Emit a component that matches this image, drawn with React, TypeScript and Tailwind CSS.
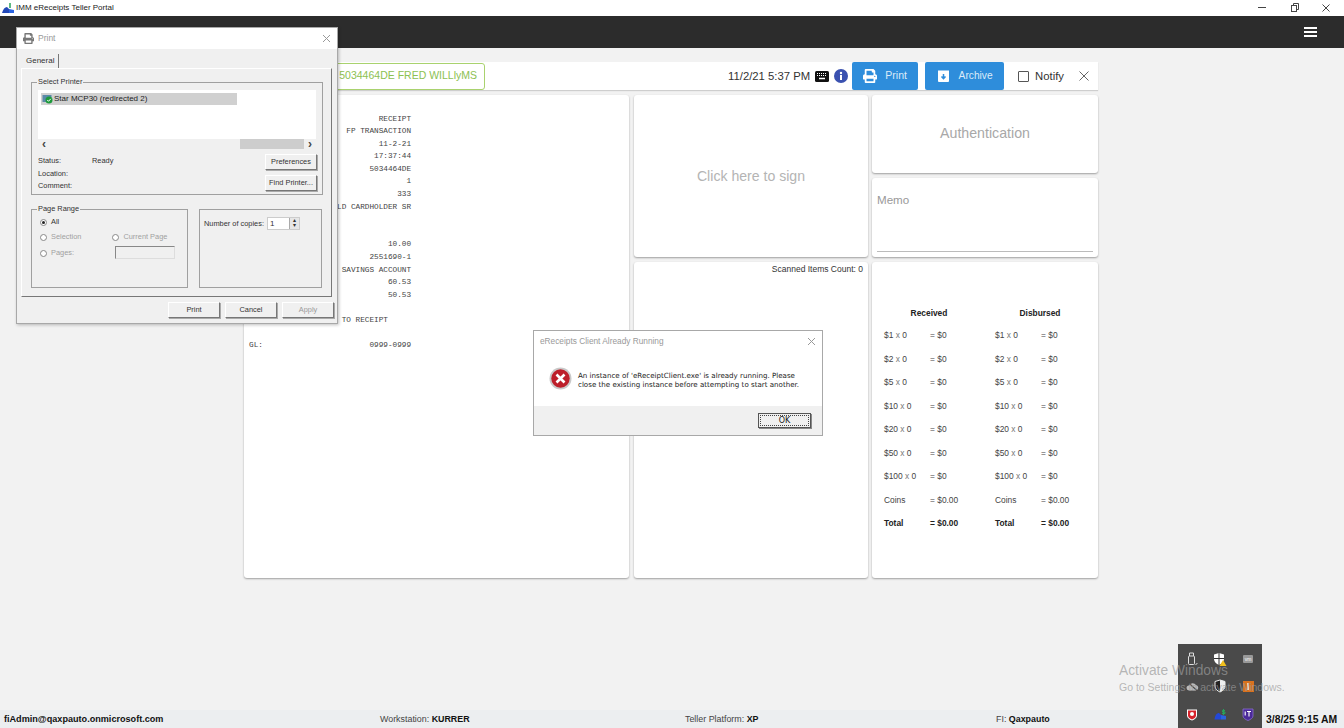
import { FaPrint } from "react-icons/fa";

const receiptLines = [
	"                            RECEIPT",
	"                     FP TRANSACTION",
	"                            11-2-21",
	"                           17:37:44",
	"                          5034464DE",
	"                                  1",
	"                                333",
	"                   LD CARDHOLDER SR",
	" ",
	" ",
	"                              10.00",
	"                          2551690-1",
	"                    SAVINGS ACCOUNT",
	"                              60.53",
	"                              50.53",
	" ",
	"                    TO RECEIPT",
	" ",
	"GL:                       0999-0999",
];

const denominations = ["$1", "$2", "$5", "$10", "$20", "$50", "$100"];

function CashColumn({ title }: { title: string }) {
	return (
		<div className="w-[90px]">
			<div className="h-[22px] text-center font-bold text-[#222] leading-[10px]">{title}</div>
			{denominations.map((d) => (
				<div key={d} className="flex h-[23.5px] text-[#444] leading-[10px]">
					<span className="w-[46px]">
						{d} <span className="text-[#777]">x</span> 0
					</span>
					<span>= $0</span>
				</div>
			))}
			<div className="flex h-[23.5px] text-[#444] leading-[10px]">
				<span className="w-[46px]">Coins</span>
				<span>= $0.00</span>
			</div>
			<div className="flex h-[20px] font-bold text-[#222] leading-[10px]">
				<span className="w-[46px]">Total</span>
				<span>= $0.00</span>
			</div>
		</div>
	);
}

function Card({ className, children }: { className: string; children?: React.ReactNode }) {
	return (
		<div className={`bg-white rounded-[3px] shadow-[0_1px_2px_rgba(0,0,0,0.35)] ${className}`}>
			{children}
		</div>
	);
}

function WinButton({ label, disabled, className = "" }: { label: string; disabled?: boolean; className?: string }) {
	return (
		<div
			className={`flex items-center justify-center bg-[#f0f0f0] border border-[#fff] border-r-[#777] border-b-[#777] shadow-[1px_1px_0_#aaa] ${
				disabled ? "text-[#9a9a9a]" : "text-[#333]"
			} ${className}`}
		>
			{label}
		</div>
	);
}

function Radio({ checked, label, disabled }: { checked?: boolean; label: string; disabled?: boolean }) {
	return (
		<div className={`flex items-center gap-[4px] ${disabled ? "text-[#a0a0a0]" : "text-[#333]"}`}>
			<span className="w-[7px] h-[7px] rounded-full bg-white border border-[#888] flex items-center justify-center">
				{checked && <span className="w-[3px] h-[3px] rounded-full bg-[#222]" />}
			</span>
			{label}
		</div>
	);
}

function GroupLabel({ label }: { label: string }) {
	return (
		<span className="absolute -top-[6px] left-[5px] bg-[#f0f0f0] px-[1px] leading-[10px] text-[#333]">
			{label}
		</span>
	);
}

function PrintDialog() {
	return (
		<div className="absolute left-[16px] top-[27px] w-[322px] h-[297px] bg-[#f0f0f0] border border-[#a8a8a8] shadow-[1px_1px_3px_rgba(0,0,0,0.25)] text-[7.4px] font-['Liberation_Sans',sans-serif]">
			<div className="h-[21px] bg-white flex items-center pl-[6px] pr-[6px]">
				<FaPrint size={11} className="text-[#777]" />
				<span className="ml-[4px] text-[8.5px] text-[#999]">Print</span>
				<svg className="ml-auto" width="9" height="9" viewBox="0 0 9 9" stroke="#999" strokeWidth="1">
					<path d="M1 1l7 7M8 1l-7 7" />
				</svg>
			</div>
			<div className="px-[4px] pt-[5px]">
				<div className="h-[14px] w-[37px] ml-[1px] border-r border-[#777] flex items-center pl-[4px] text-[#333] text-[8px]">
					General
				</div>
				<div className="w-[311px] h-[229px] border border-[#fff] border-r-[#777] border-b-[#777] pl-[9px] pt-[13px]">
					{/* Select Printer */}
					<div className="relative w-[292px] h-[113px] border border-[#a0a0a0] pl-[6px] pr-[6px] pt-[7px]">
						<GroupLabel label="Select Printer" />
						<div className="h-[49px] bg-white pt-[3px] pl-[3px]">
							<div className="w-[196px] h-[12px] bg-[#d0d0d0] flex items-center pl-[1px] gap-[1px] text-[8px] text-[#222]">
								<svg width="11" height="10" viewBox="0 0 11 10">
									<rect x="0.5" y="1" width="9" height="7" fill="#5a8aa8" />
									<circle cx="7" cy="6" r="3.5" fill="#1d9a3b" />
									<path d="M5.3 6l1.2 1.3L8.8 4.8" stroke="#fff" strokeWidth="1" fill="none" />
								</svg>
								Star MCP30 (redirected 2)
							</div>
						</div>
						<div className="h-[10px] flex items-center justify-between">
							<span className="ml-[4px] text-[#444] text-[12px] leading-none font-bold">‹</span>
							<span className="ml-auto w-[64px] h-[10px] bg-[#cdcdcd]" />
							<span className="ml-[4px] mr-[4px] text-[#444] text-[12px] leading-none font-bold">›</span>
						</div>
						<div className="flex justify-between mt-[3px]">
							<div className="flex flex-col pt-[4px] text-[#333] gap-[2.5px] leading-[10px]">
								<div className="flex">
									<span className="w-[54px]">Status:</span>
									<span>Ready</span>
								</div>
								<span>Location:</span>
								<span>Comment:</span>
							</div>
							<div className="flex flex-col gap-[5px] mt-[2px] -mr-[1px]">
								<WinButton label="Preferences" className="w-[52px] h-[16px]" />
								<WinButton label="Find Printer..." className="w-[52px] h-[16px]" />
							</div>
						</div>
					</div>
					<div className="flex mt-[14px]">
						{/* Page Range */}
						<div className="relative w-[157px] h-[79px] border border-[#a0a0a0] pl-[8px] pt-[7px] flex flex-col gap-[5px] leading-[10px]">
							<GroupLabel label="Page Range" />
							<Radio checked label="All" />
							<div className="flex gap-[31px]">
								<Radio disabled label="Selection" />
								<Radio disabled label="Current Page" />
							</div>
							<div className="flex">
								<Radio disabled label="Pages:" />
								<span className="ml-[41px] -mt-[1px] w-[60px] h-[13px] border border-[#888] border-r-[#ddd] border-b-[#ddd]" />
							</div>
						</div>
						{/* Copies */}
						<div className="ml-[11px] w-[123px] h-[79px] border border-[#a0a0a0] pl-[4px] pt-[7px]">
							<div className="flex items-center text-[#333]">
								<span>Number of copies:</span>
								<span className="ml-[3px] w-[33px] h-[13px] bg-white border border-[#ccc] flex items-center pl-[2px] text-[8px]">
									1
									<span className="ml-auto w-[10px] h-[11px] bg-[#e6e6e6] border-l border-[#aaa] text-[6px] leading-[5px] text-center">
										▴
										<br />▾
									</span>
								</span>
							</div>
						</div>
					</div>
				</div>
				<div className="flex justify-end gap-[5px] mt-[5px] -mr-[1px]">
					<WinButton label="Print" className="w-[52px] h-[16px]" />
					<WinButton label="Cancel" className="w-[52px] h-[16px]" />
					<WinButton label="Apply" disabled className="w-[52px] h-[16px]" />
				</div>
			</div>
		</div>
	);
}

function ErrorDialog() {
	return (
		<div className="absolute left-[533px] top-[330px] w-[290px] h-[106px] bg-white border border-[#a8a8a8] flex flex-col font-['DejaVu_Sans',sans-serif]">
			<div className="h-[21px] flex items-center pl-[6px] pr-[6px] text-[8.3px] text-[#999] font-['Liberation_Sans',sans-serif]">
				eReceipts Client Already Running
				<svg className="ml-auto" width="9" height="9" viewBox="0 0 9 9" stroke="#999" strokeWidth="1">
					<path d="M1 1l7 7M8 1l-7 7" />
				</svg>
			</div>
			<div className="flex-1 flex items-start pl-[15px] pt-[15px]">
				<svg width="23" height="23" viewBox="0 0 23 23">
					<circle cx="11.5" cy="11.5" r="11" fill="#c9c9c9" />
					<circle cx="11.5" cy="11.5" r="9.2" fill="#bd1f2a" />
					<path d="M7.5 7.5l8 8M15.5 7.5l-8 8" stroke="#fff" strokeWidth="2.6" />
				</svg>
				<p className="ml-[6px] mt-[4px] text-[7.1px] leading-[9.4px] text-[#222] whitespace-pre">
					{"An instance of 'eReceiptClient.exe' is already running. Please\nclose the existing instance before attempting to start another."}
				</p>
			</div>
			<div className="h-[29px] bg-[#f0f0f0] flex justify-end items-center pr-[11px]">
				<div className="w-[53px] h-[15px] border border-[#555] bg-[#f0f0f0] p-[1px] shadow-[1px_1px_0_#888]">
					<div className="h-full border border-dotted border-[#444] flex items-center justify-center text-[8px] text-[#222]">
						OK
					</div>
				</div>
			</div>
		</div>
	);
}

function TrayPopup() {
	return (
		<div className="absolute left-[1178px] top-[644px] w-[84px] h-[84px] bg-[#4a4a4a] grid grid-cols-3 grid-rows-3 place-items-center pt-[1px]">
			{/* usb stick */}
			<svg width="12" height="14" viewBox="0 0 12 14" fill="none" stroke="#ddd" strokeWidth="1">
				<rect x="2.5" y="4" width="6" height="8.500" rx="1" />
				<path d="M3.5 4V1h4v3M9.500 12.500c1 0 1.500-.5 1.500-1.500" />
			</svg>
			{/* defender warning */}
			<svg width="14" height="14" viewBox="0 0 14 14">
				<path d="M6 1l5 1.500V7c0 3-2.500 5-5 6-2.500-1-5-3-5-6V2.500z" fill="#fff" />
				<path d="M6 1v12M1 6.500h10" stroke="#333" strokeWidth="1" />
				<path d="M10 8l3.500 6h-7z" fill="#f2c01e" />
			</svg>
			<span className="w-[10px] h-[8px] bg-[#999] rounded-[1px] text-[5px] leading-[8px] text-center text-white font-['Liberation_Sans',sans-serif]">
				vm
			</span>
			{/* cloud off */}
			<svg width="13" height="11" viewBox="0 0 13 11">
				<path d="M3 9.500a2.500 2.500 0 0 1 0-5 4 4 0 0 1 7-.5 2.800 2.800 0 0 1 0 5.500z" fill="#bbb" />
				<path d="M1.500 1l10 9" stroke="#4a4a4a" strokeWidth="1.200" />
			</svg>
			{/* half shield */}
			<svg width="12" height="14" viewBox="0 0 12 14">
				<path d="M6 1l5 1.500V7c0 3-2.500 5-5 6-2.500-1-5-3-5-6V2.500z" fill="#222" stroke="#eee" strokeWidth="1" />
				<path d="M6 1l5 1.500V7c0 3-2.500 5-5 6z" fill="#eee" />
			</svg>
			<span className="w-[11px] h-[11px] bg-[#d9721e] flex items-center justify-center">
				<span className="w-[1.5px] h-[7px] bg-[#f6d5b0]" />
			</span>
			{/* red badge */}
			<svg width="12" height="13" viewBox="0 0 12 13">
				<path d="M1 1.500h10v6c0 2.500-2.500 4-5 5-2.500-1-5-2.500-5-5z" fill="#fff" />
				<path d="M2 2.500h8v5c0 2-2 3-4 4-2-1-4-2-4-4z" fill="#d8232c" />
				<circle cx="6" cy="6" r="2" fill="#fff" />
			</svg>
			{/* money shield */}
			<svg width="13" height="12" viewBox="0 0 13 12">
				<path d="M0.500 11.500C1 7 3 5 5 5l2 2v4.500z" fill="#2348d8" />
				<path d="M7 11.500V7l5 1v3.500z" fill="#2a63e0" />
				<path d="M9.500 1v6M11 2.500H8.500v1.500H11v1.500H8" stroke="#27a35a" strokeWidth="1" fill="none" />
			</svg>
			{/* IT shield */}
			<svg width="12" height="13" viewBox="0 0 12 13">
				<path d="M1 1h10v7c0 2-2.500 3.500-5 4.500-2.500-1-5-2.500-5-4.500z" fill="#4b2a9a" stroke="#8a6fd0" strokeWidth="0.800" />
				<path d="M3.200 3.500v4M5 3.500h4M7 3.500v5" stroke="#fff" strokeWidth="1.100" />
			</svg>
		</div>
	);
}

export default function App() {
	return (
		<div className="relative w-full h-screen overflow-hidden flex flex-col bg-[#f2f2f2] font-['Liberation_Sans',sans-serif]">
			{/* Window title */}
			<div className="h-[16px] bg-white flex items-center shrink-0">
				<svg className="ml-[2px]" width="12" height="12" viewBox="0 0 12 12">
					<path d="M0 11c1-4 3-6 5-6l2 2v4z" fill="#2348b8" />
					<path d="M7 11V7l5 1v3z" fill="#2a63e0" />
					<path d="M8 1v5" stroke="#27a35a" strokeWidth="1.500" />
				</svg>
				<span className="ml-[2px] text-[8px] text-[#222]">IMM eReceipts Teller Portal</span>
				<div className="ml-auto flex items-center">
					<svg width="31" height="10" viewBox="0 0 31 10" stroke="#444" fill="none">
						<path d="M1 4.500h8" />
					</svg>
					<svg width="32" height="10" viewBox="0 0 32 10" stroke="#444" fill="none">
						<rect x="3.500" y="2.500" width="5" height="6" />
						<path d="M5.500 2.500V0.500h5v6h-2" />
					</svg>
					<svg className="mr-[14px] ml-[2px]" width="8" height="8" viewBox="0 0 8 8" stroke="#444" fill="none">
						<path d="M0.500 0.500l7 7M7.500 0.500l-7 7" />
					</svg>
				</div>
			</div>

			{/* App bar */}
			<div className="h-[32px] bg-[#2c2c2c] flex items-center justify-end pr-[27px] shrink-0">
				<div className="w-[13px] flex flex-col gap-[2px]">
					<span className="h-[2px] bg-white" />
					<span className="h-[2px] bg-white" />
					<span className="h-[2px] bg-white" />
				</div>
			</div>

			{/* Main */}
			<div className="flex-1 pl-[244px] pt-[14px]">
				<div className="w-[854px]">
					{/* Toolbar */}
					<div className="h-[28px] bg-white shadow-[0_1px_1px_rgba(0,0,0,0.15)] flex items-center">
						<div className="w-[241px] h-[27px] border border-[#a9d26e] rounded-[3px] flex items-center justify-end pr-[7px] text-[10.5px] text-[#8cc152]">
							5034464DE FRED WILLlyMS
						</div>
						<span className="ml-auto text-[11.3px] text-[#333]">11/2/21 5:37 PM</span>
						<svg className="ml-[5px]" width="14" height="11" viewBox="0 0 14 11">
							<rect width="14" height="11" rx="1.500" fill="#111" />
							<path d="M2 2.500h10M2 4.500h10" stroke="#fff" strokeWidth="1" strokeDasharray="1 1" />
							<path d="M4 7.500h6" stroke="#fff" strokeWidth="1.500" />
						</svg>
						<svg className="ml-[5px]" width="14" height="14" viewBox="0 0 14 14">
							<circle cx="7" cy="7" r="7" fill="#3a51b0" />
							<rect x="6" y="6" width="2" height="5" fill="#fff" />
							<circle cx="7" cy="4" r="1.200" fill="#fff" />
						</svg>
						<div className="ml-[4px] w-[66px] h-[28px] bg-[#2e8ddb] rounded-[2px] flex items-center justify-center gap-[8px] text-[10.5px] text-[#dcebf8]">
							<FaPrint size={14} className="text-white" />
							Print
						</div>
						<div className="ml-[7px] w-[79px] h-[28px] bg-[#2e8ddb] rounded-[2px] flex items-center justify-center gap-[9px] text-[10.2px] text-[#dcebf8]">
							<svg width="13" height="14" viewBox="0 0 13 14">
								<path d="M1 1.500h11V12a1 1 0 0 1-1 1H2a1 1 0 0 1-1-1z" fill="#fff" />
								<path d="M6.500 5v4M4.500 7.500l2 2.200 2-2.200" stroke="#2e8ddb" strokeWidth="1.500" fill="none" />
							</svg>
							Archive
						</div>
						<span className="ml-[14px] w-[11px] h-[11px] border border-[#555] rounded-[1px]" />
						<span className="ml-[6px] text-[11.3px] text-[#333]">Notify</span>
						<svg className="ml-[15px] mr-[9px]" width="10" height="10" viewBox="0 0 10 10" stroke="#666" strokeWidth="1" fill="none">
							<path d="M0.500 0.500l9 9M9.500 0.500l-9 9" />
						</svg>
					</div>

					{/* Panels */}
					<div className="flex mt-[5px] h-[483px]">
						<Card className="w-[385px] pl-[5px] pt-[17.500px]">
							<pre className="font-['Liberation_Mono',monospace] text-[7.73px] leading-[12.6px] text-[#444]">
								{receiptLines.join("\n")}
							</pre>
						</Card>
						<div className="w-[234px] ml-[5px] flex flex-col gap-[5px]">
							<Card className="h-[162px] flex items-center justify-center pt-[1px] text-[14.1px] text-[#b4b4b4]">
								Click here to sign
							</Card>
							<Card className="flex-1 text-right pr-[5px] pt-[2px] text-[8.5px] leading-[10px] text-[#333]">
								Scanned Items Count: 0
							</Card>
						</div>
						<div className="w-[226px] ml-[4px] flex flex-col gap-[5px]">
							<Card className="h-[78px] flex items-center justify-center pb-[1px] text-[14.2px] text-[#a8a8a8]">
								Authentication
							</Card>
							<Card className="h-[79px] px-[5px] pt-[15px] text-[11.6px] text-[#999] flex flex-col justify-between pb-[5px]">
								<span className="leading-[14px]">Memo</span>
								<span className="h-[1px] bg-[#bbb]" />
							</Card>
							<Card className="flex-1 flex gap-[21px] pl-[12px] pt-[46px] text-[8.4px]">
								<CashColumn title="Received" />
								<CashColumn title="Disbursed" />
							</Card>
						</div>
					</div>
				</div>
			</div>

			{/* Status bar */}
			<div className="h-[18px] bg-[#eceef0] shrink-0 grid grid-cols-[380px_305px_311px_270px_1fr] items-center text-[8.9px] text-[#444] pt-[1px]">
				<span className="pl-[4px] font-bold text-[9.1px] text-[#111]">fiAdmin@qaxpauto.onmicrosoft.com</span>
				<span>
					Workstation: <b className="text-[#111]">KURRER</b>
				</span>
				<span>
					Teller Platform: <b className="text-[#111]">XP</b>
				</span>
				<span>
					FI: <b className="text-[#111]">Qaxpauto</b>
				</span>
				<span className="font-bold text-[10.4px] text-[#111] whitespace-nowrap">3/8/25 9:15 AM</span>
			</div>

			<PrintDialog />
			<ErrorDialog />
			<TrayPopup />

			{/* Activate Windows watermark */}
			<div className="absolute left-[1119px] top-[663px] text-[#9a9a9a]/70 pointer-events-none">
				<div className="text-[13.8px] leading-[16px]">Activate Windows</div>
				<div className="text-[10.5px] leading-[14px] mt-[1px]">Go to Settings to activate Windows.</div>
			</div>
		</div>
	);
}
